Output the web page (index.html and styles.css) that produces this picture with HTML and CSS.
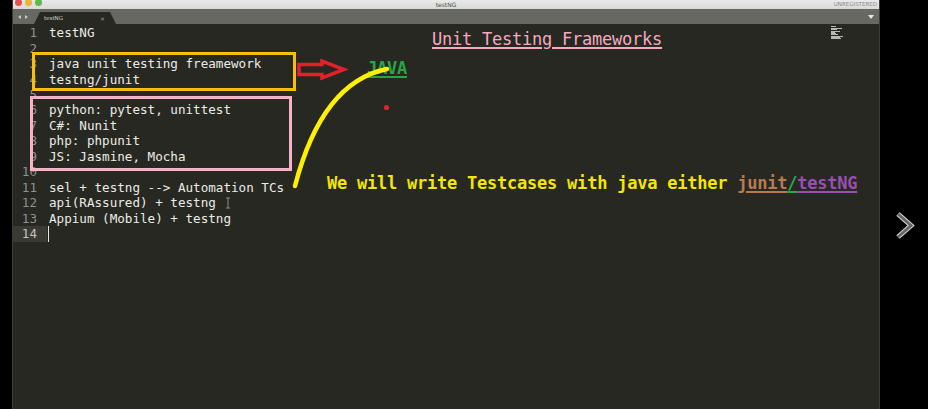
FILE: index.html
```html
<!DOCTYPE html>
<html>
<head>
<meta charset="utf-8">
<link rel="stylesheet" href="styles.css">
</head>
<body>
<div class="window">
  <div class="titlebar">
    <div class="lights"><span class="light red"></span><span class="light yellow"></span><span class="light green"></span></div>
    <div class="title">testNG</div>
    <div class="unreg">UNREGISTERED</div>
  </div>
  <div class="tabbar">
    <div class="navarrows"><span class="navl"></span><span class="navr"></span></div>
    <div class="tab"><span class="tabname">testNG</span><span class="tabclose">&times;</span></div>
    <div class="tabspacer"></div>
    <div class="dropdown"></div>
  </div>
  <div class="editor">
    <div class="gutter">
      <div class="ln">1</div><div class="ln">2</div><div class="ln">3</div><div class="ln">4</div><div class="ln">5</div><div class="ln">6</div><div class="ln">7</div><div class="ln">8</div><div class="ln">9</div><div class="ln">10</div><div class="ln">11</div><div class="ln">12</div><div class="ln">13</div><div class="ln current">14</div>
    </div>
    <div class="code">
      <div class="line">testNG</div>
      <div class="line"></div>
      <div class="line">java unit testing freamework</div>
      <div class="line">testng/junit</div>
      <div class="line"></div>
      <div class="line">python: pytest, unittest</div>
      <div class="line">C#: Nunit</div>
      <div class="line">php: phpunit</div>
      <div class="line">JS: Jasmine, Mocha</div>
      <div class="line"></div>
      <div class="line">sel + testng --&gt; Automation TCs</div>
      <div class="line">api(RAssured) + testng</div>
      <div class="line">Appium (Mobile) + testng</div>
      <div class="line"><span class="caret"></span></div>
    </div>
    <div class="minimap">
      <div class="mm"><span class="mmbar w6"></span></div>
      <div class="mm"></div>
      <div class="mm"><span class="mmbar w12"></span></div>
      <div class="mm"><span class="mmbar w7"></span></div>
      <div class="mm"></div>
      <div class="mm"><span class="mmbar w10"></span></div>
      <div class="mm"><span class="mmbar w5"></span></div>
      <div class="mm"><span class="mmbar w6"></span></div>
      <div class="mm"><span class="mmbar w8"></span></div>
      <div class="mm"></div>
      <div class="mm"><span class="mmbar w13"></span></div>
      <div class="mm"><span class="mmbar w10"></span></div>
      <div class="mm"><span class="mmbar w11"></span></div>
    </div>
  </div>
</div>

<div class="annotations">
  <div class="box orange"></div>
  <div class="box pink"></div>
  <div class="note heading">Unit Testing Frameworks</div>
  <div class="note java">JAVA</div>
  <div class="note sentence">We will write Testcases with java either <span class="junit">junit</span><span class="slash">/</span><span class="testng">testNG</span></div>
  <svg class="ink" width="928" height="409" viewBox="0 0 928 409">
    <path d="M299 64.5 L322 64.5 L322 61 L344 69.5 L322 78 L322 74.5 L299 74.5 Z" fill="none" stroke="#e4202a" stroke-width="3.5" stroke-linejoin="miter"/>
    <path d="M295 186 Q322 82 387 69" fill="none" stroke="#fff000" stroke-width="4.5" stroke-linecap="round"/>
    <circle cx="386.5" cy="107.5" r="2.6" fill="#e4202a"/>
    <path d="M226 198 L230 198 M228 198 L228 208 M226 208 L230 208" stroke="#8a8a84" stroke-width="1" fill="none"/>
    <polyline points="898,214 911,225.5 898,237" fill="none" stroke="#d8d8d8" stroke-width="5" stroke-linejoin="miter"/>
    <polyline points="898,214 911,225.5 898,237" fill="none" stroke="#666" stroke-width="3" stroke-linejoin="miter"/>
  </svg>
</div>
</body>
</html>
```

FILE: styles.css
```css
html, body {
  margin: 0;
  padding: 0;
}
body {
  background: #000;
  width: 928px;
  height: 409px;
  overflow: hidden;
  position: relative;
  font-family: "DejaVu Sans Mono", "Liberation Mono", monospace;
}
.window {
  margin-left: 12px;
  width: 868px;
  height: 409px;
  display: flex;
  flex-direction: column;
  background: #272822;
  border-left: 1px solid #3b3b37;
  border-right: 1px solid #3b3b37;
  box-sizing: border-box;
}
.titlebar {
  height: 9px;
  background: linear-gradient(#e9e9e9, #d9d9d9);
  display: grid;
  grid-template-columns: 1fr auto 1fr;
  align-items: center;
  font-family: "DejaVu Sans", sans-serif;
}
.lights {
  display: flex;
  gap: 3px;
  padding-left: 2px;
  align-self: start;
  margin-top: -1px;
}
.light {
  width: 7px;
  height: 7px;
  border-radius: 50%;
  display: block;
}
.light.red { background: #e5534b; }
.light.yellow { background: #e8b538; }
.light.green { background: #5fb848; }
.title {
  font-size: 6px;
  color: #4a4a4a;
  line-height: 9px;
}
.unreg {
  justify-self: end;
  font-size: 5.5px;
  color: #8b8b8b;
  padding-right: 2px;
  line-height: 9px;
}
.tabbar {
  height: 15px;
  background: #686863;
  display: flex;
  align-items: flex-end;
  font-family: "DejaVu Sans", sans-serif;
}
.navarrows {
  width: 21px;
  height: 15px;
  padding-left: 5px;
  box-sizing: border-box;
  display: flex;
  align-items: center;
  gap: 4px;
  align-self: center;
}
.navl, .navr {
  width: 0;
  height: 0;
  border-top: 2.5px solid transparent;
  border-bottom: 2.5px solid transparent;
}
.navl { border-right: 3px solid #c8c8c4; }
.navr { border-left: 3px solid #c8c8c4; }
.tab {
  width: 82px;
  height: 12px;
  background: #272822;
  clip-path: polygon(6px 0, 76px 0, 82px 100%, 0 100%);
  display: flex;
  align-items: center;
  justify-content: space-between;
  padding: 0 11px 0 10px;
  box-sizing: border-box;
}
.tabname {
  font-size: 5.5px;
  color: #cfcfca;
}
.tabclose {
  font-size: 6px;
  color: #a8a8a4;
}
.tabspacer { flex: 1; }
.dropdown {
  align-self: center;
  width: 0;
  height: 0;
  border-left: 3px solid transparent;
  border-right: 3px solid transparent;
  border-top: 4px solid #e8e8e8;
  margin-right: 5px;
}
.editor {
  flex: 1;
  display: flex;
  background: #272822;
  padding-top: 1.2px;
  font-size: 12.6px;
  line-height: 15.46px;
}
.gutter {
  width: 34px;
  flex: none;
}
.ln {
  height: 15.46px;
  text-align: right;
  padding-right: 10px;
  color: #8f908a;
}
.ln.current {
  background: #3b3a32;
  color: #c2c2bc;
}
.code {
  flex: 1;
  padding-left: 2px;
  color: #ecece6;
}
.line {
  height: 15.46px;
  white-space: pre;
}
.caret {
  display: inline-block;
  width: 1px;
  height: 16px;
  background: #e8e8e2;
  vertical-align: -3px;
  margin-left: -1px;
}
.minimap {
  width: 48px;
  flex: none;
  padding-top: 1px;
}
.mm {
  height: 1px;
  line-height: 1px;
  display: flex;
}
.mmbar {
  display: block;
  height: 1px;
  background: #b8b8b2;
}
.w5 { width: 4px; }
.w6 { width: 5px; }
.w7 { width: 6px; }
.w8 { width: 7px; }
.w10 { width: 9px; }
.w11 { width: 10px; }
.w12 { width: 11px; }
.w13 { width: 12px; }

.annotations {
  position: absolute;
  inset: 0;
  pointer-events: none;
}
.box {
  position: absolute;
  box-sizing: border-box;
  border-width: 3px;
  border-style: solid;
}
.box.orange {
  left: 32px;
  top: 52px;
  width: 264px;
  height: 39px;
  border-color: #f7bf0c;
}
.box.pink {
  left: 30px;
  top: 96px;
  width: 262px;
  height: 75px;
  border-color: #f6b3c7;
}
.note {
  position: absolute;
  font-family: "DejaVu Sans Mono", "Liberation Mono", monospace;
  font-size: 17px;
  line-height: 17px;
  letter-spacing: -0.23px;
  white-space: pre;
  text-decoration: underline;
  text-decoration-thickness: 2px;
  text-underline-offset: 2px;
}
.heading {
  left: 432px;
  top: 31px;
  color: #f5a8c0;
}
.java {
  left: 367px;
  top: 60px;
  color: #28a645;
  font-weight: bold;
}
.sentence {
  left: 327px;
  top: 175px;
  color: #f3e600;
  font-weight: bold;
  text-decoration: none;
}
.junit {
  color: #b97a52;
  text-decoration: underline;
  text-decoration-thickness: 2px;
  text-underline-offset: 2px;
}
.slash {
  color: #2aa84a;
  text-decoration: underline;
  text-decoration-thickness: 2px;
  text-underline-offset: 2px;
}
.testng {
  color: #9b4eb1;
  text-decoration: underline;
  text-decoration-thickness: 2px;
  text-underline-offset: 2px;
}
.ink {
  position: absolute;
  left: 0;
  top: 0;
}
```
